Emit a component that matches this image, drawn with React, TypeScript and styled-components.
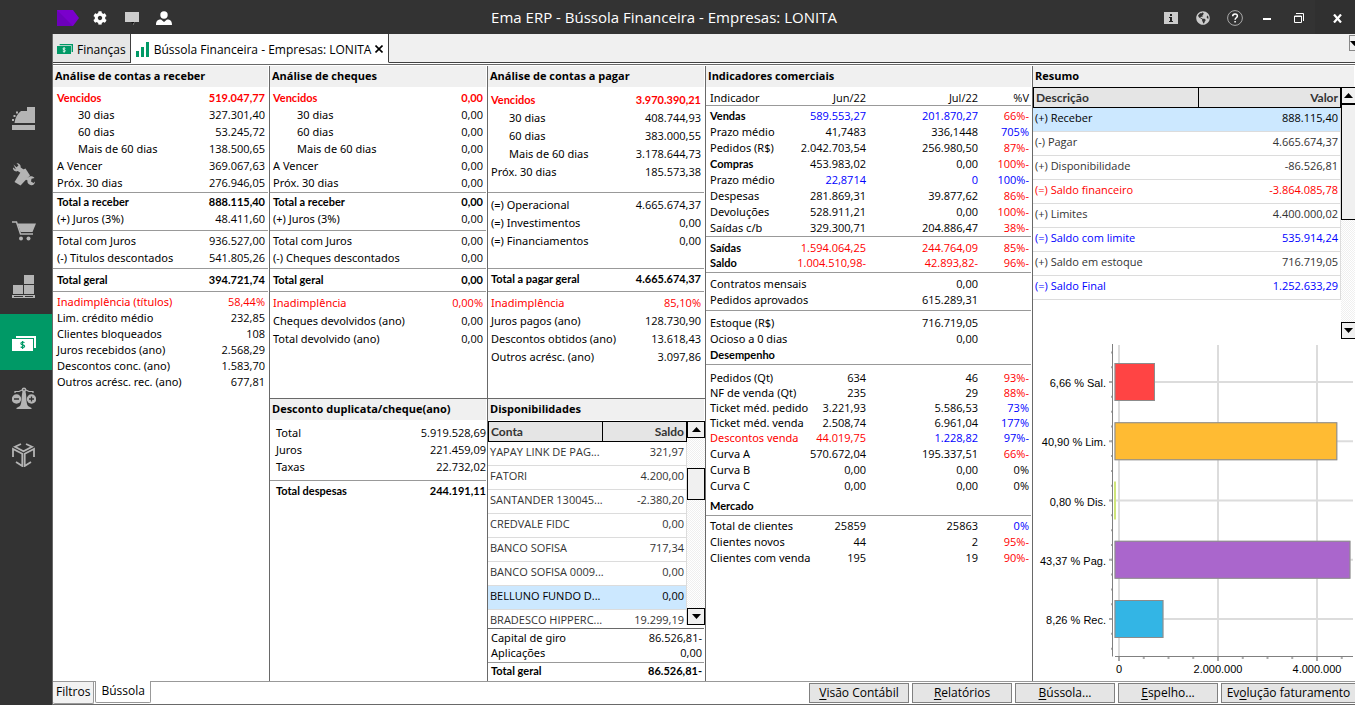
import React from 'react';
import styled, { createGlobalStyle, css } from 'styled-components';
import { FaCog, FaGlobeAmericas } from 'react-icons/fa';

const SANS = '"Open Sans", "Noto Sans", sans-serif';
const LABEL = '"Noto Sans", "Open Sans", sans-serif';
const HUMANIST = 'Lato, "Open Sans", sans-serif';
const RED = '#ff0000';
const BLUE = '#0000ff';
const FRAME = '#696969';
const RULE = '#999999';
const FACE = '#f0f0f0';

const GlobalStyle = createGlobalStyle`
  *, *::before, *::after { box-sizing: border-box; }
  body { margin: 0; background: #fff; color: #000; font-family: ${SANS}; font-size: 11px; }
  button { font: inherit; color: inherit; padding: 0; cursor: pointer; }
  svg { display: block; }
`;

/* ---------- shell ---------- */

const Shell = styled.div`
  display: flex;
  flex-direction: column;
  min-height: 100vh;
  background: #333;
  overflow: hidden;
`;

const TopBar = styled.header`
  display: grid;
  grid-template-columns: 1fr auto 1fr;
  align-items: center;
  height: 34px;
  padding-left: 57px;
  color: #fff;
`;

const AppTitle = styled.h1`
  margin: 0;
  padding-right: 84px;
  font-size: 15px;
  line-height: 20px;
  font-weight: 400;
  white-space: nowrap;
`;

const ToolGroup = styled.div<{ $end?: boolean }>`
  display: flex;
  align-items: center;
  justify-content: ${p => (p.$end ? 'flex-end' : 'flex-start')};
  height: 100%;
`;

const ToolButton = styled.button<{ $dark?: boolean }>`
  display: flex;
  align-items: center;
  justify-content: center;
  width: ${p => (p.$dark ? 40 : 32)}px;
  height: 34px;
  border: 0;
  padding: 2px 0 0 ${p => (p.$dark ? 4 : 0)}px;
  background: ${p => (p.$dark ? '#303030' : 'transparent')};
`;

const Brand = styled.span`
  width: 27px;
  padding-top: 2px;
`;

const Body = styled.div`
  display: grid;
  grid-template-columns: 52px minmax(0, 1fr);
  flex: 1;
`;

const SideNav = styled.nav`
  display: flex;
  flex-direction: column;
  padding-top: 56px;
`;

const NavButton = styled.button<{ $active?: boolean }>`
  display: flex;
  align-items: center;
  height: 56px;
  border: 0;
  padding: 2px 0 0 12px;
  background: ${p => (p.$active ? '#009966' : 'transparent')};
  color: ${p => (p.$active ? '#fff' : '#b4b4b4')};
`;

const Main = styled.main`
  display: flex;
  flex-direction: column;
  background: #fff;
  border-left: 1px solid ${FRAME};
  border-bottom: 1px solid ${FRAME};
  min-width: 0;
`;

const TabStrip = styled.div`
  display: flex;
  height: 29px;
  margin-bottom: 1px;
  background: ${FACE};
`;

const DocTab = styled.div<{ $active?: boolean }>`
  display: flex;
  align-items: center;
  padding: 2px ${p => (p.$active ? 5 : 4)}px 0;
  border-right: 1px solid #404040;
  border-bottom: 1px solid ${p => (p.$active ? '#fff' : '#404040')};
  background: ${p => (p.$active ? '#fff' : '#e6e6e6')};
  font-size: 12px;
  white-space: nowrap;
`;

const TabLabel = styled.button`
  display: flex;
  align-items: center;
  gap: 4px;
  border: 0;
  background: none;
`;

const TabClose = styled.button`
  margin-left: 4px;
  border: 0;
  background: none;
`;

const StripRest = styled.div`
  flex: 1;
  display: flex;
  justify-content: flex-end;
  border-bottom: 1px solid #404040;
`;

const StripMenu = styled.button`
  width: 6px;
  height: 16px;
  margin-top: 1px;
  border: 1px solid #888;
  border-right: 0;
  background: ${FACE};
  overflow: hidden;
`;

/* ---------- dashboard ---------- */

const Dashboard = styled.div`
  flex: 1;
  display: grid;
  grid-template-columns: minmax(0, 216fr) minmax(0, 218fr) minmax(0, 218fr) minmax(0, 327fr) minmax(0, 323fr);
  padding-top: 1px;
  border-top: 1px solid ${FRAME};
`;

const Column = styled.div`
  display: flex;
  flex-direction: column;
  & + & { border-left: 1px solid ${FRAME}; }
`;

const Panel = styled.section<{ $upper?: boolean }>`
  ${p => p.$upper && css`
    min-height: 333px;
    border-bottom: 1px solid ${FRAME};
  `}
`;

const PanelTitle = styled.h2`
  margin: 0 1px 0 0;
  padding: 0 0 2px 2px;
  background: ${FACE};
  font-family: ${SANS};
  font-size: 11px;
  line-height: 19px;
  font-weight: 700;
  white-space: nowrap;
`;

const FigureTable = styled.table`
  width: calc(100% - 1px);
  table-layout: fixed;
  border-collapse: separate;
  border-spacing: 0;
  white-space: nowrap;
`;

const FigureGroup = styled.tbody<{ $row: number; $top: number; $bottom: number; $rule: boolean }>`
  th, td { padding: 0; line-height: ${p => p.$row}px; }
  tr:first-child > * { padding-top: ${p => p.$top}px; }
  tr:last-child > * {
    padding-bottom: ${p => p.$bottom}px;
    ${p => p.$rule && css`border-bottom: 1px solid ${RULE};`}
  }
`;

const LabelCell = styled.th<{ $bold?: boolean; $color?: string; $inset: number }>`
  && { padding-left: ${p => p.$inset}px; }
  text-align: left;
  color: ${p => p.$color || 'inherit'};
  font-weight: ${p => (p.$bold ? 700 : 400)};
  font-family: ${p => (p.$bold ? HUMANIST : LABEL)};
`;

const ValueCell = styled.td<{ $bold?: boolean; $color?: string; $edge: number }>`
  && { padding-right: ${p => p.$edge}px; }
  text-align: right;
  color: ${p => p.$color || 'inherit'};
  font-weight: ${p => (p.$bold ? 700 : 400)};
  font-family: ${p => (p.$bold ? HUMANIST : SANS)};
`;

type Cell = string | [string, string];
interface Line { label: string; cells: Cell[]; bold?: boolean; boldLabel?: boolean; color?: string; indent?: boolean }
interface Group { row: number; top?: number; bottom?: number; rule?: boolean; lines: Line[] }

const line = (label: string, value: string, extra: Partial<Line> = {}): Line => ({ label, cells: [value], ...extra });

const Figures = ({ groups, widths, inset = 4, indent = 25, edge = 3 }: {
  groups: Group[]; widths: number[]; inset?: number; indent?: number; edge?: number;
}) => (
  <FigureTable>
    <colgroup>
      <col />
      {widths.map((w, i) => <col key={i} width={w} />)}
    </colgroup>
    {groups.map((g, gi) => (
      <FigureGroup key={gi} $row={g.row} $top={g.top ?? 0} $bottom={g.bottom ?? 0} $rule={g.rule !== false}>
        {g.lines.map((l, li) => (
          <tr key={li}>
            <LabelCell scope="row" $bold={l.bold || l.boldLabel} $color={l.color} $inset={l.indent ? indent : inset}>
              {l.label}
            </LabelCell>
            {widths.map((_, i) => {
              const c = l.cells[i] ?? '';
              const [text, color] = Array.isArray(c) ? c : [c, l.color];
              return (
                <ValueCell key={i} $bold={l.bold} $color={color} $edge={i === widths.length - 1 ? edge : 0}>
                  {text}
                </ValueCell>
              );
            })}
          </tr>
        ))}
      </FigureGroup>
    ))}
  </FigureTable>
);

const receber: Group[] = [
  { row: 17, top: 2, bottom: 1, lines: [
    line('Vencidos', '519.047,77', { bold: true, color: RED }),
    line('30 dias', '327.301,40', { indent: true }),
    line('60 dias', '53.245,72', { indent: true }),
    line('Mais de 60 dias', '138.500,65', { indent: true }),
    line('A Vencer', '369.067,63'),
    line('Próx. 30 dias', '276.946,05'),
  ] },
  { row: 17, bottom: 3, lines: [
    line('Total a receber', '888.115,40', { bold: true }),
    line('(+) Juros (3%)', '48.411,60'),
  ] },
  { row: 17, top: 1, bottom: 2, lines: [
    line('Total com Juros', '936.527,00'),
    line('(-) Titulos descontados', '541.805,26'),
  ] },
  { row: 17, top: 2, bottom: 3, lines: [line('Total geral', '394.721,74', { bold: true })] },
  { row: 16, top: 2, rule: false, lines: [
    line('Inadimplência (títulos)', '58,44%', { color: RED }),
    line('Lim. crédito médio', '232,85'),
    line('Clientes bloqueados', '108'),
    line('Juros recebidos (ano)', '2.568,29'),
    line('Descontos conc. (ano)', '1.583,70'),
    line('Outros acrésc. rec. (ano)', '677,81'),
  ] },
];

const cheques: Group[] = [
  { row: 17, top: 2, bottom: 1, lines: [
    line('Vencidos', '0,00', { bold: true, color: RED }),
    line('30 dias', '0,00', { indent: true }),
    line('60 dias', '0,00', { indent: true }),
    line('Mais de 60 dias', '0,00', { indent: true }),
    line('A Vencer', '0,00'),
    line('Próx. 30 dias', '0,00'),
  ] },
  { row: 17, bottom: 3, lines: [
    line('Total a receber', '0,00', { bold: true }),
    line('(+) Juros (3%)', '0,00'),
  ] },
  { row: 17, top: 1, bottom: 2, lines: [
    line('Total com Juros', '0,00'),
    line('(-) Cheques descontados', '0,00'),
  ] },
  { row: 17, top: 2, bottom: 3, lines: [line('Total geral', '0,00', { bold: true })] },
  { row: 18, top: 2, rule: false, lines: [
    line('Inadimplência', '0,00%', { color: RED }),
    line('Cheques devolvidos (ano)', '0,00'),
    line('Total devolvido (ano)', '0,00'),
  ] },
];

const descontos: Group[] = [
  { row: 17, top: 4, bottom: 5, lines: [
    line('Total', '5.919.528,69'),
    line('Juros', '221.459,09'),
    line('Taxas', '22.732,02'),
  ] },
  { row: 17, top: 1, rule: false, lines: [line('Total despesas', '244.191,11', { bold: true })] },
];

const pagar: Group[] = [
  { row: 18, top: 4, bottom: 11, lines: [
    line('Vencidos', '3.970.390,21', { bold: true, color: RED }),
    line('30 dias', '408.744,93', { indent: true }),
    line('60 dias', '383.000,55', { indent: true }),
    line('Mais de 60 dias', '3.178.644,73', { indent: true }),
    line('Próx. 30 dias', '185.573,38'),
  ] },
  { row: 18, top: 3, bottom: 18, lines: [
    line('(=) Operacional', '4.665.674,37'),
    line('(=) Investimentos', '0,00'),
    line('(=) Financiamentos', '0,00'),
  ] },
  { row: 17, top: 1, bottom: 4, lines: [line('Total a pagar geral', '4.665.674,37', { bold: true })] },
  { row: 18, top: 2, rule: false, lines: [
    line('Inadimplência', '85,10%', { color: RED }),
    line('Juros pagos (ano)', '128.730,90'),
    line('Descontos obtidos (ano)', '13.618,43'),
    line('Outros acrésc. (ano)', '3.097,86'),
  ] },
];

const caixa: Group[] = [
  { row: 15, top: 1, bottom: 2, lines: [
    line('Capital de giro', '86.526,81-'),
    line('Aplicações', '0,00'),
  ] },
  { row: 15, rule: false, lines: [line('Total geral', '86.526,81-', { bold: true })] },
];

const r = (t: string): Cell => [t, RED];
const b = (t: string): Cell => [t, BLUE];

const indicadores: Group[] = [
  { row: 15, top: 3, lines: [{ label: 'Indicador', cells: ['Jun/22', 'Jul/22', '%V'] }] },
  { row: 16, top: 2, lines: [
    { label: 'Vendas', boldLabel: true, cells: [b('589.553,27'), b('201.870,27'), r('66%-')] },
    { label: 'Prazo médio', cells: ['41,7483', '336,1448', b('705%')] },
    { label: 'Pedidos (R$)', cells: ['2.042.703,54', '256.980,50', r('87%-')] },
    { label: 'Compras', boldLabel: true, cells: ['453.983,02', '0,00', r('100%-')] },
    { label: 'Prazo médio', cells: [b('22,8714'), b('0'), b('100%-')] },
    { label: 'Despesas', cells: ['281.869,31', '39.877,62', r('86%-')] },
    { label: 'Devoluções', cells: ['528.911,21', '0,00', r('100%-')] },
    { label: 'Saídas c/b', cells: ['329.300,71', '204.886,47', r('38%-')] },
  ] },
  { row: 15, top: 3, bottom: 2, lines: [
    { label: 'Saídas', boldLabel: true, cells: [r('1.594.064,25'), r('244.764,09'), r('85%-')] },
    { label: 'Saldo', boldLabel: true, cells: [r('1.004.510,98-'), r('42.893,82-'), r('96%-')] },
  ] },
  { row: 16, top: 3, bottom: 2, lines: [
    { label: 'Contratos mensais', cells: ['', '0,00'] },
    { label: 'Pedidos aprovados', cells: ['', '615.289,31'] },
  ] },
  { row: 16, top: 4, bottom: 1, lines: [
    { label: 'Estoque (R$)', cells: ['', '716.719,05'] },
    { label: 'Ocioso a 0 dias', cells: ['', '0,00'] },
    { label: 'Desempenho', boldLabel: true, cells: [] },
  ] },
  { row: 15, top: 5, rule: false, lines: [
    { label: 'Pedidos (Qt)', cells: ['634', '46', r('93%-')] },
    { label: 'NF de venda (Qt)', cells: ['235', '29', r('88%-')] },
    { label: 'Ticket méd. pedido', cells: ['3.221,93', '5.586,53', b('73%')] },
    { label: 'Ticket méd. venda', cells: ['2.508,74', '6.961,04', b('177%')] },
  ] },
  { row: 16, rule: false, lines: [
    { label: 'Descontos venda', color: RED, cells: ['44.019,75', b('1.228,82'), b('97%-')] },
    { label: 'Curva A', cells: ['570.672,04', '195.337,51', r('66%-')] },
    { label: 'Curva B', cells: ['0,00', '0,00', '0%'] },
    { label: 'Curva C', cells: ['0,00', '0,00', '0%'] },
  ] },
  { row: 16, top: 4, bottom: 1, lines: [{ label: 'Mercado', boldLabel: true, cells: [] }] },
  { row: 16, top: 2, rule: false, lines: [
    { label: 'Total de clientes', cells: ['25859', '25863', b('0%')] },
    { label: 'Clientes novos', cells: ['44', '2', r('95%-')] },
    { label: 'Clientes com venda', cells: ['195', '19', r('90%-')] },
  ] },
];

/* ---------- scrolling grids ---------- */

const GridBox = styled.div<{ $height: number; $top?: number }>`
  display: flex;
  height: ${p => p.$height}px;
  margin-top: ${p => p.$top ?? 0}px;
  overflow: hidden;
`;

const GridView = styled.div`
  flex: 1;
  min-width: 0;
  overflow: hidden;
`;

const DataGrid = styled.table`
  width: 100%;
  table-layout: fixed;
  border-collapse: separate;
  border-spacing: 0;
  color: #333;
  white-space: nowrap;

  th {
    height: 21px;
    padding: 0 2px;
    border: 1px solid #000;
    border-left-width: 0;
    background: #e5e5e5;
    font-family: ${HUMANIST};
    font-size: 12px;
    line-height: 19px;
    text-align: left;
  }
  th:first-child { border-left-width: 1px; }
  th + th, td + td { text-align: right; }
  td {
    height: 24px;
    padding: 0 2px 3px;
    border-bottom: 1px solid #dcdcdc;
    line-height: 16px;
  }
  td + td { border-right: 1px solid #dcdcdc; }
`;

const GridRow = styled.tr<{ $selected?: boolean; $color?: string }>`
  background: ${p => (p.$selected ? '#cce8ff' : '#fff')};
  color: ${p => p.$color || (p.$selected ? '#000' : 'inherit')};
`;

const ScrollBar = styled.div<{ $width: number; $clipped?: boolean }>`
  display: flex;
  flex-direction: column;
  width: ${p => p.$width}px;
  background: repeating-conic-gradient(#fff 0 25%, #efefef 0 50%) 0 0 / 2px 2px;
  button, span {
    border: 1px solid #000;
    ${p => p.$clipped && css`border-right: 0;`}
    background: ${FACE};
  }
`;

const ScrollArrow = styled.button`
  display: flex;
  align-items: center;
  justify-content: center;
  height: 17px;
`;

const ScrollSpace = styled.i<{ $size?: number }>`
  ${p => (p.$size === undefined ? css`flex: 1;` : css`height: ${p.$size}px;`)}
`;

const ScrollThumb = styled.span<{ $size: number }>`
  height: ${p => p.$size}px;
`;

const FooterRule = styled.hr`
  height: 1px;
  margin: 3px 1px 0 0;
  border: 0;
  background: ${FRAME};
`;

const Triangle = ({ down }: { down?: boolean }) => (
  <svg width="9" height="5" viewBox="0 0 9 5" aria-hidden="true">
    <path d={down ? 'M0 0h9L4.5 5z' : 'M0 5h9L4.5 0z'} fill="#000" />
  </svg>
);

const Scroll = ({ width, before, thumb, clipped }: { width: number; before: number; thumb: number; clipped?: boolean }) => (
  <ScrollBar $width={width} $clipped={clipped}>
    <ScrollArrow aria-label="Rolar para cima"><Triangle /></ScrollArrow>
    <ScrollSpace $size={before} />
    <ScrollThumb $size={thumb} />
    <ScrollSpace />
    <ScrollArrow aria-label="Rolar para baixo"><Triangle down /></ScrollArrow>
  </ScrollBar>
);

const contas: [string, string, boolean?][] = [
  ['YAPAY LINK DE PAG...', '321,97'],
  ['FATORI', '4.200,00'],
  ['SANTANDER 130045...', '-2.380,20'],
  ['CREDVALE FIDC', '0,00'],
  ['BANCO SOFISA', '717,34'],
  ['BANCO SOFISA 0009...', '0,00'],
  ['BELLUNO FUNDO D...', '0,00', true],
  ['BRADESCO HIPPERC...', '19.299,19'],
];

const resumo: [string, string, string?][] = [
  ['(+) Receber', '888.115,40'],
  ['(-) Pagar', '4.665.674,37'],
  ['(+) Disponibilidade', '-86.526,81'],
  ['(=) Saldo financeiro', '-3.864.085,78', RED],
  ['(+) Limites', '4.400.000,02'],
  ['(=) Saldo com limite', '535.914,24', BLUE],
  ['(+) Saldo em estoque', '716.719,05'],
  ['(=) Saldo Final', '1.252.633,29', BLUE],
];

/* ---------- chart ---------- */

const ChartSvg = styled.svg`
  width: 100%;
  height: auto;
  font-family: "Liberation Sans", Arial, sans-serif;
  font-size: 11px;
`;

const bars = [
  { label: '6,66 % Sal.', value: 716719, fill: '#ff4444' },
  { label: '40,90 % Lim.', value: 4400000, fill: '#ffbb33' },
  { label: '0,80 % Dis.', value: -86526, fill: '#cfe57a' },
  { label: '43,37 % Pag.', value: 4665674, fill: '#aa66cc' },
  { label: '8,26 % Rec.', value: 888115, fill: '#33b5e5' },
];

const ZERO = 86;
const BASE = 82;
const PITCH = 59.25;
const xOf = (v: number) => ZERO + (v / 2000000) * 99;
const yOf = (i: number) => 43 + i * PITCH;

const Chart = () => (
  <ChartSvg viewBox="0 0 322 342" role="img" aria-label="Resumo financeiro">
    <g stroke="#dcdcdc" strokeWidth="2">
      {[0, 2000000, 4000000].map(v => <path key={v} d={`M${xOf(v)} 6V317`} />)}
      {bars.map((bar, i) => <path key={bar.label} d={`M${BASE} ${yOf(i)}H320`} />)}
    </g>
    <g stroke="#aaa" strokeWidth="2">
      {bars.map((bar, i) => <path key={bar.label} d={`M76 ${yOf(i)}h3`} />)}
      {Array.from({ length: 21 }, (_, i) => <path key={i} d={`M78 ${13.4 + i * PITCH / 4}h2`} />)}
      {Array.from({ length: 10 }, (_, i) => (
        <path key={i} d={`M${ZERO + i * 24.75} 318v${i % 4 === 0 ? 4 : 2}`} />
      ))}
    </g>
    <path d="M79.5 5V317.5M82 317.5H320" stroke="#808080" fill="none" />
    {bars.map((bar, i) => bar.value < 0
      ? <rect key={bar.label} x="81" y={yOf(i) - 19} width="2" height="38" fill={bar.fill} />
      : (
        <g key={bar.label}>
          <rect x={BASE - 0.5} y={yOf(i) - 19} width={xOf(bar.value) - BASE + 1} height="38" fill="#bdbdbd" />
          <rect x={BASE} y={yOf(i) - 18.5} width={xOf(bar.value) - BASE} height="37" fill={bar.fill} stroke="#8c8c8c" />
        </g>
      ))}
    {bars.map((bar, i) => (
      <text key={bar.label} x="73" y={Math.round(yOf(i)) + 5} textAnchor="end">{bar.label}</text>
    ))}
    <text x="86" y="334" textAnchor="middle">0</text>
    <text x="185" y="334" textAnchor="middle">2.000.000</text>
    <text x="284" y="334" textAnchor="middle">4.000.000</text>
  </ChartSvg>
);

/* ---------- footer ---------- */

const Footer = styled.footer`
  display: flex;
  height: 23px;
  border-top: 1px solid ${RULE};
  font-size: 12px;
  white-space: nowrap;
`;

const PageTab = styled.button<{ $active?: boolean }>`
  height: 22px;
  margin: ${p => (p.$active ? '-1px 0 0 1px' : '0')};
  padding: 0 ${p => (p.$active ? 5 : 3)}px 2px;
  border: 1px solid ${RULE};
  border-top: 0;
  border-left-width: ${p => (p.$active ? 1 : 0)}px;
  border-radius: 0 0 2px 2px;
  background: ${p => (p.$active ? '#fff' : '#f2f2f2')};
`;

const Actions = styled.div`
  display: flex;
  gap: 3px;
  margin-left: auto;
  padding-top: 1px;
`;

const ActionButton = styled.button<{ $wide?: boolean }>`
  width: ${p => (p.$wide ? 134 : 100)}px;
  height: 20px;
  border: 1px solid #808080;
  border-right-width: ${p => (p.$wide ? 0 : 1)}px;
  background: #e5e5e5;
  line-height: 18px;
  u { text-underline-offset: 2px; }
`;

/* ---------- icons ---------- */

const BrandIcon = () => (
  <svg width="22" height="16" viewBox="0 0 22 16">
    <path d="M0 0h16l6 8-6 8H0z" fill="#7a00cc" />
    <path d="M0 0l16 16H0z" fill="#6c00bb" />
  </svg>
);
const ChatIcon = () => (
  <svg width="14" height="14" viewBox="0 0 14 14">
    <path d="M0 1h14v10h-4l-2 3V11H0z" fill="#ccc" />
    <path d="M6 11h4l-2 2z" fill="#111" />
  </svg>
);
const PersonIcon = () => (
  <svg width="16" height="15" viewBox="0 0 16 15" fill="#fff">
    <circle cx="8" cy="4" r="3.7" />
    <path d="M0 14c0-4 1.5-5.5 5-5.5l3 2.5 3-2.5c3.500 0 5 1.500 5 5.500z" />
  </svg>
);
const InfoIcon = () => (
  <svg width="14" height="12" viewBox="0 0 14 12">
    <path d="M0 0h14v12H0z" fill="#ccc" />
    <path d="M6 2h2v2H6zM5 5h3v4h1v1H5V9h1V6H5z" fill="#222" />
  </svg>
);
const HelpIcon = () => (
  <svg width="16" height="16" viewBox="0 0 16 16" fill="none" stroke="#ddd">
    <circle cx="8" cy="8" r="7.400" stroke="#aaa" />
    <path d="M5.700 6.300c0-3.200 4.700-3 4.700-.3 0 1.700-2.300 1.800-2.300 3.700M8.100 11v1.600" stroke="#fff" strokeWidth="1.500" />
  </svg>
);
const MinimizeIcon = () => (
  <svg width="8" height="3" viewBox="0 0 8 3"><path d="M0 1h8v2H0z" fill="#fff" /></svg>
);
const RestoreIcon = () => (
  <svg width="10" height="10" viewBox="0 0 10 10" fill="none" stroke="#fff">
    <path d="M2 .5h7.500V8" />
    <path d="M.5 3h7v6.500h-7z" />
    <path d="M0 3.500h8" />
  </svg>
);
const CloseIcon = () => (
  <svg width="9" height="9" viewBox="0 0 9 9"><path d="M1 .5l7 8M8 .5l-7 8" stroke="#fff" strokeWidth="2.200" /></svg>
);
const CrossIcon = () => (
  <svg width="8" height="8" viewBox="0 0 8 8"><path d="M.5.5l7 7M7.500.5l-7 7" stroke="#000" strokeWidth="1.600" /></svg>
);
const CashIcon = ({ color, ink, width }: { color: string; ink: string; width: number }) => (
  <svg width={width} viewBox="0 0 24 15" fill={color}>
    <path d="M4 0h20v12h-2V2H4z" />
    <path d="M0 3h21v12H0z" />
    <path d="M12.500 6.600c-1.200-1-3.600-.8-3.600.8 0 1.800 3.700 1 3.700 2.800 0 1.600-2.700 1.700-3.900.6M10.600 5v8" fill="none" stroke={ink} strokeWidth="1.200" />
  </svg>
);
const BarsIcon = () => (
  <svg width="14" height="15" viewBox="0 0 14 15" fill="#009966">
    <path d="M0 9h3v6H0zM5 5h3v10H5zM10 0h3v15h-3z" />
  </svg>
);

const RegisterIcon = () => (
  <svg width="24" height="24" viewBox="0 0 24 24" fill="currentColor">
    <path d="M0 18h23v5H0z" />
    <path d="M15 0h8v16H2.500C3 11 5.500 6.500 9 4h6z" />
    <path d="M0 12h2v2H0zM1.500 8h2v2h-2zM4 4.500h2v2H4z" />
  </svg>
);
const ToolsIcon = () => (
  <svg width="24" height="24" viewBox="0 0 24 24" fill="currentColor">
    <path d="M1.500 1.500l3 2.700 2-1.700L4.500 0C7.500.2 9 2.200 8.700 4.500l3 2-3 3.500-3-2C3.500 9.500.5 7 1 4.500l3 2z" />
    <path d="M10 7l3.500-1.500 4.500 7-9.500 10-6-3.500z" />
    <path d="M15.500 15c2-2.500 5.500-2 7 0l-3 .7-.5 2.800 2.500 1.500 1.500-1.500c0 2.700-2.200 4.200-4.500 3.500s-3.500-2.500-3-4.500L12 15.500l2-2z" />
  </svg>
);
const CartIcon = () => (
  <svg width="24" height="24" viewBox="0 0 24 24">
    <path d="M0 3h4.500l4 12H21" fill="none" stroke="currentColor" strokeWidth="1.500" />
    <path d="M5.500 4.500H24L20.500 13H8.500z" fill="currentColor" />
    <circle cx="9" cy="19.500" r="2" fill="currentColor" />
    <circle cx="16.500" cy="19.500" r="2" fill="currentColor" />
  </svg>
);
const PalletIcon = () => (
  <svg width="24" height="24" viewBox="0 0 24 24" fill="currentColor">
    <path d="M12 0h10v9H12zM1 10h10v9H1zM12 10h10v9H12zM0 20h23v1H0zM0 21h2v2H0zM11 21h2v2h-2zM21 21h2v2h-2zM0 22h23v1H0z" />
  </svg>
);
const ScaleIcon = () => (
  <svg width="24" height="24" viewBox="0 0 24 24" fill="currentColor">
    <path d="M11 1h2v2.500c2 3 .5 12 3 15.500l3.500 2v1h-15v-1L8 19c2.500-3.500 1-12.500 3-15.500z" />
    <circle cx="12" cy="2.800" r="2.300" />
    <path d="M3 6V4.500h4L10 3M21 6V4.500h-4L14 3" fill="none" stroke="currentColor" strokeWidth="1.200" />
    <circle cx="4.500" cy="12" r="4.700" />
    <circle cx="19.500" cy="12" r="4.700" />
    <path d="M2 12h5M17 12h5M19.500 9.500v5" stroke="#333" strokeWidth="1.300" />
    <circle cx="12" cy="2.800" r=".8" fill="#333" />
  </svg>
);
const CubeIcon = () => (
  <svg width="24" height="24" viewBox="0 0 24 24" fill="none" stroke="currentColor" strokeWidth="1.800">
    <path d="M9 1L3 3.800l8.500 4.400L20 3.800 14 1" />
    <path d="M1 14V6l9.300 4.700V23l-6.300-4M22 14V6l-9.300 4.700V23l6.300-4" />
  </svg>
);

const modules = [
  { name: 'Vendas', icon: <RegisterIcon /> },
  { name: 'Serviços', icon: <ToolsIcon /> },
  { name: 'Compras', icon: <CartIcon /> },
  { name: 'Estoque', icon: <PalletIcon /> },
  { name: 'Finanças', icon: <CashIcon color="#fff" ink="#009966" width={24} />, active: true },
  { name: 'Fiscal', icon: <ScaleIcon /> },
  { name: 'Produção', icon: <CubeIcon /> },
];

export default function App() {
  return (
    <Shell>
      <GlobalStyle />
      <TopBar>
        <ToolGroup>
          <Brand><BrandIcon /></Brand>
          <ToolButton aria-label="Configurações"><FaCog size={14} color="#fff" /></ToolButton>
          <ToolButton aria-label="Mensagens"><ChatIcon /></ToolButton>
          <ToolButton aria-label="Usuário"><PersonIcon /></ToolButton>
        </ToolGroup>
        <AppTitle>Ema ERP - Bússola Financeira - Empresas: LONITA</AppTitle>
        <ToolGroup $end>
          <ToolButton aria-label="Informações"><InfoIcon /></ToolButton>
          <ToolButton aria-label="Site"><FaGlobeAmericas size={14} color="#ccc" /></ToolButton>
          <ToolButton aria-label="Ajuda"><HelpIcon /></ToolButton>
          <ToolButton aria-label="Minimizar"><MinimizeIcon /></ToolButton>
          <ToolButton aria-label="Restaurar"><RestoreIcon /></ToolButton>
          <ToolButton $dark aria-label="Fechar"><CloseIcon /></ToolButton>
        </ToolGroup>
      </TopBar>
      <Body>
        <SideNav>
          {modules.map(m => (
            <NavButton key={m.name} aria-label={m.name} $active={m.active}>{m.icon}</NavButton>
          ))}
        </SideNav>
        <Main>
          <TabStrip>
            <DocTab>
              <TabLabel><CashIcon color="#009966" ink="#fff" width={16} />Finanças</TabLabel>
            </DocTab>
            <DocTab $active>
              <TabLabel><BarsIcon />Bússola Financeira - Empresas: LONITA</TabLabel>
              <TabClose aria-label="Fechar aba"><CrossIcon /></TabClose>
            </DocTab>
            <StripRest>
              <StripMenu aria-label="Lista de abas"><Triangle down /></StripMenu>
            </StripRest>
          </TabStrip>

          <Dashboard>
            <Column>
              <Panel>
                <PanelTitle>Análise de contas a receber</PanelTitle>
                <Figures groups={receber} widths={[62]} />
              </Panel>
            </Column>
            <Column>
              <Panel $upper>
                <PanelTitle>Análise de cheques</PanelTitle>
                <Figures groups={cheques} widths={[62]} inset={3} indent={27} />
              </Panel>
              <Panel>
                <PanelTitle>Desconto duplicata/cheque(ano)</PanelTitle>
                <Figures groups={descontos} widths={[72]} inset={6} edge={0} />
              </Panel>
            </Column>
            <Column>
              <Panel $upper>
                <PanelTitle>Análise de contas a pagar</PanelTitle>
                <Figures groups={pagar} widths={[72]} inset={3} indent={21} />
              </Panel>
              <Panel>
                <PanelTitle>Disponibilidades</PanelTitle>
                <GridBox $height={204} $top={1}>
                  <GridView>
                    <DataGrid>
                      <colgroup><col width="58%" /><col /></colgroup>
                      <thead><tr><th>Conta</th><th>Saldo</th></tr></thead>
                      <tbody>
                        {contas.map(([name, value, selected]) => (
                          <GridRow key={name} $selected={selected}><td>{name}</td><td>{value}</td></GridRow>
                        ))}
                      </tbody>
                    </DataGrid>
                  </GridView>
                  <Scroll width={18} before={30} thumb={32} />
                </GridBox>
                <FooterRule />
                <Figures groups={caixa} widths={[62]} inset={3} edge={2} />
              </Panel>
            </Column>
            <Column>
              <Panel>
                <PanelTitle>Indicadores comerciais</PanelTitle>
                <Figures groups={indicadores} widths={[72, 112, 53]} edge={2} />
              </Panel>
            </Column>
            <Column>
              <Panel>
                <PanelTitle>Resumo</PanelTitle>
                <GridBox $height={252}>
                  <GridView>
                    <DataGrid>
                      <colgroup><col width="54%" /><col /></colgroup>
                      <thead><tr><th>Descrição</th><th>Valor</th></tr></thead>
                      <tbody>
                        {resumo.map(([name, value, color], i) => (
                          <GridRow key={name} $selected={i === 0} $color={color}><td>{name}</td><td>{value}</td></GridRow>
                        ))}
                      </tbody>
                    </DataGrid>
                  </GridView>
                  <Scroll width={14} before={0} thumb={116} clipped />
                </GridBox>
              </Panel>
              <Chart />
            </Column>
          </Dashboard>

          <Footer>
            <PageTab>Filtros</PageTab>
            <PageTab $active>Bússola</PageTab>
            <Actions>
              <ActionButton><u>V</u>isão Contábil</ActionButton>
              <ActionButton><u>R</u>elatórios</ActionButton>
              <ActionButton><u>B</u>ússola...</ActionButton>
              <ActionButton><u>E</u>spelho...</ActionButton>
              <ActionButton $wide>Ev<u>o</u>lução faturamento</ActionButton>
            </Actions>
          </Footer>
        </Main>
      </Body>
    </Shell>
  );
}
